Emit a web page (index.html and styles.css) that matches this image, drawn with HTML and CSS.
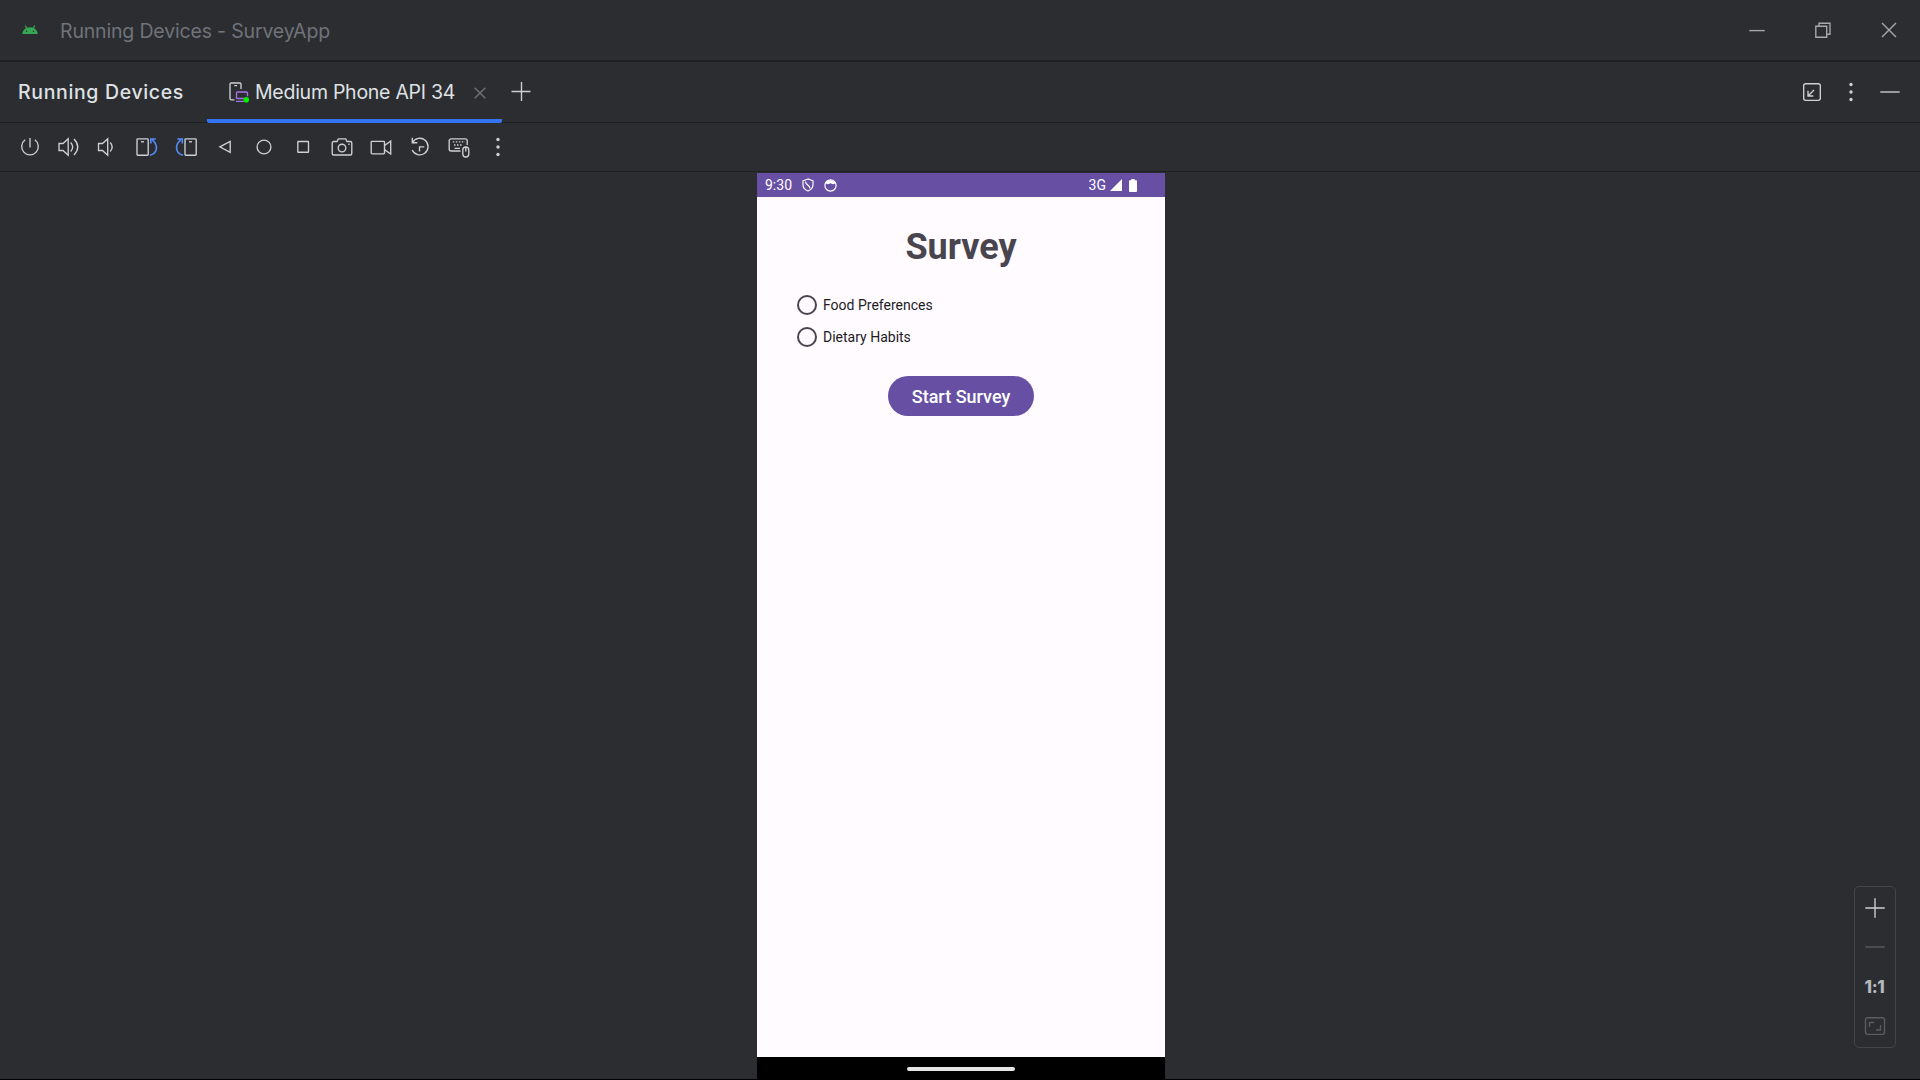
FILE: index.html
```
<!DOCTYPE html>
<html lang="en">
<head>
<meta charset="utf-8">
<title>Running Devices - SurveyApp</title>
<link rel="stylesheet" href="styles.css">
</head>
<body>
<div class="window">
  <header class="titlebar">
    <svg class="android" width="16" height="10" viewBox="0 0 16 10"><path class="antenna" d="M3.200.6 5 3.600M12.800.6 11 3.600"/><path class="green" d="M.3 9C.6 5.200 3.600 2.300 8 2.300S15.400 5.200 15.700 9z"/><circle class="eye" cx="4.600" cy="6.300" r=".7"/><circle class="eye" cx="11.400" cy="6.300" r=".7"/></svg>
    <span class="title">Running Devices - SurveyApp</span>
    <div class="window-buttons">
      <svg width="18" height="18" viewBox="0 0 18 18"><path d="M1.300 9.600h15.400"/></svg>
      <svg width="18" height="18" viewBox="0 0 18 18"><path d="M1.800 5.200h10.900v11H1.800zM5 5V2.200h11v11h-3"/></svg>
      <svg width="18" height="18" viewBox="0 0 18 18"><path d="m2 2 14 14M16 2 2 16"/></svg>
    </div>
  </header>

  <nav class="tabbar">
    <span class="tool-title">Running Devices</span>
    <div class="tab">
      <svg class="tab-icon" width="22" height="22" viewBox="0 0 22 22"><path d="M6.500 17.800H3.200a1.200 1.200 0 0 1-1.200-1.200V2.200A1.200 1.200 0 0 1 3.200 1h8.600A1.200 1.200 0 0 1 13 2.200V7M6.300 3.600h2.800"/><path class="purple" d="M8.500 16.500V11.200a1.200 1.200 0 0 1 1.200-1.200h8.600a1.200 1.200 0 0 1 1.200 1.200v3M8.500 16.500H16M8 19.300h8"/><circle class="online" cx="18.300" cy="17.700" r="2.800"/></svg>
      <span class="tab-label">Medium Phone API 34</span>
      <svg class="close" width="12" height="12" viewBox="0 0 12 12"><path d="m.7.7 10.600 10.600M11.300.7.7 11.300"/></svg>
    </div>
    <svg class="add" width="20" height="20" viewBox="0 0 20 20"><path d="M.5 9.500h19M10.500 0v19"/></svg>
    <div class="tab-actions">
      <svg width="20" height="20" viewBox="0 0 20 20"><rect x="1.700" y="1.700" width="16.600" height="16.600" rx="2"/><path d="m12 8-6 6M6 8.800V14h5.300"/></svg>
      <svg class="dots" width="20" height="20" viewBox="0 0 20 20"><circle cx="10" cy="2.500" r="1.700"/><circle cx="10" cy="10" r="1.700"/><circle cx="10" cy="17.500" r="1.700"/></svg>
      <svg width="20" height="20" viewBox="0 0 20 20"><path d="M.3 10h19.400"/></svg>
    </div>
  </nav>

  <div class="toolbar">
    <svg viewBox="0 0 24 24"><path d="M12 3v9.500M7.200 4.800a8.300 8.300 0 1 0 9.600 0"/></svg>
    <svg viewBox="0 0 24 24"><path d="M2 8.500h4l5.200-4.800v16.600L6 15.500H2zM13.700 7.500q4 4.500 0 9M17 4q7.500 8 0 16"/></svg>
    <svg viewBox="0 0 24 24"><path d="M2.500 8.500h4l5.200-4.800v16.600L6.500 15.500h-4zM14.200 7.500q4 4.500 0 9"/></svg>
    <svg viewBox="0 0 24 24"><rect x="2" y="3.800" width="11.200" height="16.400" rx=".8"/><path d="M6 6.800h3"/><path class="blue" d="M15 20.200c7-1.500 9-9.500 2.300-15.400M15.800 8.500V4h5"/></svg>
    <svg viewBox="0 0 24 24"><rect x="11" y="3.800" width="11.200" height="16.400" rx=".8"/><path d="M15 6.800h3"/><path class="blue" d="M9 20.200C2 18.700 0 10.700 6.700 4.800M8.300 8.500V4h-5"/></svg>
    <svg viewBox="0 0 24 24"><path d="m6.800 11.800 10.400-5.500v11z"/></svg>
    <svg viewBox="0 0 24 24"><circle cx="12" cy="12" r="6.900"/></svg>
    <svg viewBox="0 0 24 24"><rect x="6.800" y="6.500" width="10.700" height="10.700" rx=".5"/></svg>
    <svg viewBox="0 0 24 24"><path d="M3.700 6.500H7l1.400-2.700h7.300L17 6.500h3.300a1.500 1.500 0 0 1 1.500 1.500v10.500a1.500 1.500 0 0 1-1.500 1.500H3.700a1.500 1.500 0 0 1-1.500-1.500V8a1.500 1.500 0 0 1 1.500-1.500zM18.300 9.200h1.300"/><circle cx="12" cy="13" r="3.800"/></svg>
    <svg viewBox="0 0 24 24"><rect x="2.200" y="6.300" width="13.300" height="12.500" rx=".8"/><path d="m15.500 10.500 6.200-4.400v12.900l-6.200-4.400"/></svg>
    <svg viewBox="0 0 24 24"><path d="M4.300 2.800v4.900h5M4.500 7.500A8.300 8.300 0 1 1 4.200 15M11.500 16.500v-4.700h4.800"/></svg>
    <svg viewBox="0 0 24 24"><path d="M13.500 16H4.200a2 2 0 0 1-2-2V5.800a2 2 0 0 1 2-2h14a2 2 0 0 1 2 2V10M7.500 13.300H13"/><path class="keys" d="M5.800 6.800H18M7 10h8.500"/><path d="M15.800 15a3 3 0 0 1 6 0v4a3 3 0 0 1-6 0zM18.800 12.500v4"/></svg>
    <svg class="dots" viewBox="0 0 24 24"><circle cx="12" cy="4.500" r="1.700"/><circle cx="12" cy="12" r="1.700"/><circle cx="12" cy="19.500" r="1.700"/></svg>
  </div>

  <main class="stage">
    <section class="phone">
      <div class="status">
        <span class="clock">9:30</span>
        <svg class="shield" width="12" height="14" viewBox="0 0 12 14"><path d="M6 1 1 2.800v4c0 3 2.200 5.200 5 6.200 2.800-1 5-3.200 5-6.200v-4zM3.500 3.500c0 4 4.500 3 4.500 7"/></svg>
        <svg class="face" width="13" height="13" viewBox="0 0 13 13"><circle cx="6.500" cy="6.500" r="5.600"/><path d="M1.500 4.500A5.500 5.500 0 0 1 11.500 4.500L9 5.200 6.500 4.300 4 5.200z"/></svg>
        <span class="network">3G</span>
        <svg class="signal" width="12" height="12" viewBox="0 0 12 12"><path d="M12 0v12H0z"/></svg>
        <svg class="battery" width="8" height="13" viewBox="0 0 8 13"><path d="M2.300 0h3.400v1.300h1.500q.8 0 .8.800v10q0 .9-.8.900H.8Q0 13 0 12.100v-10q0-.8.800-.8h1.500z"/></svg>
      </div>
      <div class="app">
        <h1>Survey</h1>
        <div class="options">
          <div class="option"><i class="radio"></i><span>Food Preferences</span></div>
          <div class="option"><i class="radio"></i><span>Dietary Habits</span></div>
        </div>
        <button class="start">Start Survey</button>
      </div>
      <div class="gesture"><i></i></div>
    </section>
    <aside class="zoom">
      <svg width="20" height="20" viewBox="0 0 20 20"><path d="M.3 10h19.400M10 .3v19.400"/></svg>
      <svg class="off" width="20" height="20" viewBox="0 0 20 20"><path d="M.3 10h19.400"/></svg>
      <span class="ratio">1:1</span>
      <svg class="off fit" width="22" height="20" viewBox="0 0 22 20"><rect x="1.500" y="1.700" width="19" height="16.600" rx="2"/><path d="M5.500 11V6.500H10M16.500 9v5H12"/></svg>
    </aside>
  </main>
</div>
</body>
</html>
```
FILE: styles.css
```
* { box-sizing: border-box; }
body { margin: 0; background: #2b2d30; color: #dfe1e5; font-family: Inter, sans-serif; }
svg { display: block; flex: none; fill: none; stroke: #ced0d6; stroke-width: 1.35; }
.window { height: 1080px; display: flex; flex-direction: column; overflow: hidden; border-bottom: 1px solid #000; }

.titlebar { height: 62px; flex: none; display: flex; align-items: center; border-bottom: 2px solid #1e1f22; padding: 0 22px; }
.android .green { fill: #35a853; stroke: none; }
.android .antenna { stroke: #35a853; stroke-width: 1.1; }
.android .eye { fill: #2b2d30; stroke: none; }
.title { margin-left: 22px; padding-top: 2px; font-size: 19.5px; letter-spacing: -.17px; color: #6f737a; white-space: nowrap; }
.window-buttons { display: flex; gap: 48px; margin-left: auto; }
.window-buttons svg { stroke: #a9aaac; }

.tabbar { height: 61px; flex: none; display: flex; align-items: center; border-bottom: 1px solid #1e1f22; padding: 0 20px 0 18px; }
.tool-title { width: 189px; font-size: 19.5px; font-weight: 500; letter-spacing: .65px; white-space: nowrap; }
.tab { width: 295px; height: 61px; margin-bottom: -1px; border-bottom: 4px solid #3574f0; border-radius: 2px; display: flex; align-items: center; padding: 4px 16px 0 21px; }
.tab-icon .purple { stroke: #a571e6; }
.tab-icon .online { fill: #00ee00; stroke: none; }
.tab-label { margin: -2px 0 0 5px; font-size: 19.5px; letter-spacing: -.26px; white-space: nowrap; }
.close { margin-left: auto; stroke: #6f737a; }
.add { margin-left: 9px; }
.tab-actions { margin-left: auto; display: flex; gap: 19px; }
.dots { fill: #ced0d6; stroke: none; }

.toolbar { height: 49px; flex: none; display: flex; align-items: center; gap: 15px; border-bottom: 1px solid #1e1f22; padding-left: 18px; }
.toolbar svg { width: 24px; height: 24px; }
.toolbar .blue { stroke: #548af7; stroke-width: 1.6; }
.toolbar .keys { stroke-dasharray: 1.5 1.5; }

.stage { flex: 1; position: relative; display: flex; padding: 1px 0 0 757px; font-family: Roboto, sans-serif; }
.phone { width: 408px; display: flex; flex-direction: column; background: #fffbff; }
.status { height: 24px; flex: none; display: flex; align-items: center; background: #6750a4; color: #fff; padding: 0 28px 0 8px; font-size: 14px; }
.status svg { stroke: #fff; stroke-width: 1.2; }
.clock { width: 37px; }
.face { margin-left: 10px; }
.face path { fill: #fff; stroke: none; }
.network { margin-left: auto; margin-right: 4px; }
.status .signal, .status .battery { fill: #fff; stroke: none; }
.battery { margin-left: 7px; }

.app { flex: 1; display: flex; flex-direction: column; align-items: center; padding-top: 29px; }
h1 { margin: 0; font-size: 36px; line-height: 42px; font-weight: 700; color: #49454f; }
.options { align-self: stretch; margin-top: 21px; padding-left: 40px; }
.option { height: 32px; display: flex; align-items: center; gap: 6px; font-size: 14px; color: #1c1b1f; }
.radio { width: 20px; height: 20px; border: 2px solid #49454f; border-radius: 50%; }
.start { width: 146px; height: 40px; margin-top: 23px; border: 0; border-radius: 20px; background: #6750a4; color: #fff; font: 500 18px Roboto, sans-serif; padding: 0; }
.gesture { height: 22px; flex: none; background: #000; display: flex; align-items: center; justify-content: center; }
.gesture i { width: 108px; height: 4px; border-radius: 2px; background: #e6e6e6; margin-top: 2px; }

.zoom { position: absolute; right: 24px; bottom: 31px; width: 42px; height: 162px; border: 1px solid #43454a; border-radius: 5px; display: flex; flex-direction: column; align-items: center; justify-content: space-between; padding: 11px 1px 11px 0; }
.zoom .off { stroke: #5a5d63; }
.zoom .fit { margin-left: 1px; }
.ratio { height: 20px; font: 800 17px/20px Inter, sans-serif; letter-spacing: -.4px; color: #b4b8bf; }
```
